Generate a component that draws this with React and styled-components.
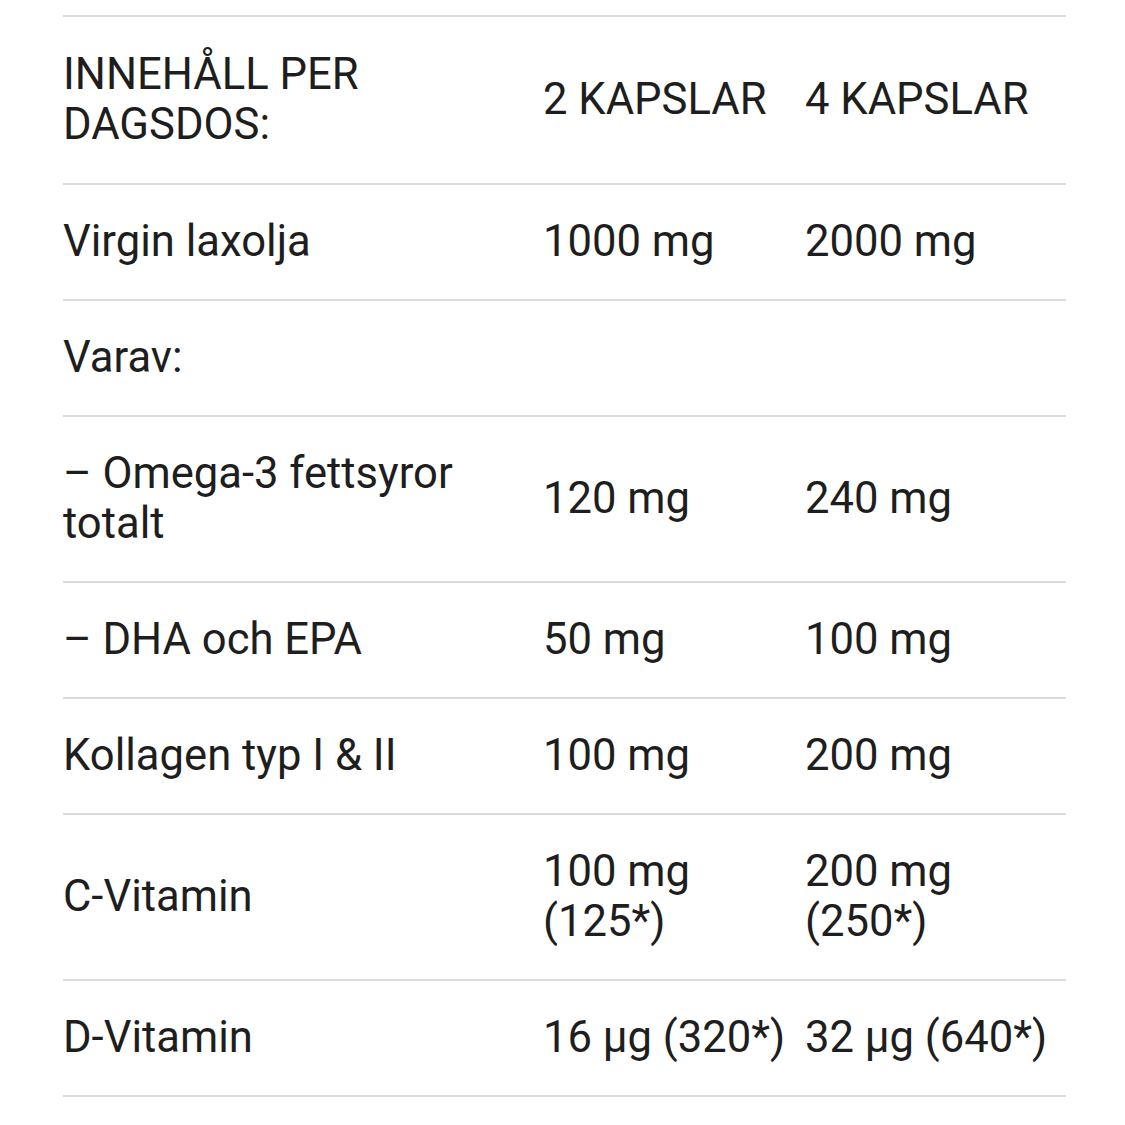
import React from 'react';
import styled, { createGlobalStyle } from 'styled-components';

const GlobalStyle = createGlobalStyle`
  html, body {
    margin: 0;
    padding: 0;
    background: #ffffff;
  }
  body {
    font-family: Roboto, "Noto Sans", "Liberation Sans", sans-serif;
    color: #1e1e1e;
    -webkit-font-smoothing: antialiased;
  }
`;

const Wrapper = styled.div`
  padding: 15px 59px 0 63px;
`;

const Table = styled.table`
  width: 1003px;
  border-collapse: collapse;
  border-top: 2px solid #dcdcdc;
  table-layout: fixed;
`;

const Row = styled.tr`
  border-bottom: 2px solid #dcdcdc;
`;

const Cell = styled.td`
  font-size: 43.6px;
  line-height: 50px;
  padding: ${p => (p.$caps ? '33px' : '32px')} 16px ${p => (p.$caps ? '33px' : '32px')} 0;
  vertical-align: middle;
  text-align: left;
  font-weight: 400;
  text-transform: ${p => (p.$caps ? 'uppercase' : 'none')};
`;

const rows = [
  ['Virgin laxolja', '1000 mg', '2000 mg'],
  ['Varav:', '', ''],
  ['– Omega-3 fettsyror totalt', '120 mg', '240 mg'],
  ['– DHA och EPA', '50 mg', '100 mg'],
  ['Kollagen typ I & II', '100 mg', '200 mg'],
  ['C-Vitamin', '100 mg (125*)', '200 mg (250*)'],
  ['D-Vitamin', '16 µg (320*)', '32 µg (640*)'],
];

export default function App() {
  return (
    <>
      <GlobalStyle />
      <Wrapper>
        <Table>
          <colgroup>
            <col style={{ width: 480 }} />
            <col style={{ width: 262 }} />
            <col style={{ width: 261 }} />
          </colgroup>
          <tbody>
            <Row>
              <Cell $caps>Innehåll per dagsdos:</Cell>
              <Cell $caps>2 kapslar</Cell>
              <Cell $caps>4 kapslar</Cell>
            </Row>
            {rows.map(([name, two, four]) => (
              <Row key={name}>
                <Cell>{name}</Cell>
                <Cell>{two}</Cell>
                <Cell>{four}</Cell>
              </Row>
            ))}
          </tbody>
        </Table>
      </Wrapper>
    </>
  );
}
